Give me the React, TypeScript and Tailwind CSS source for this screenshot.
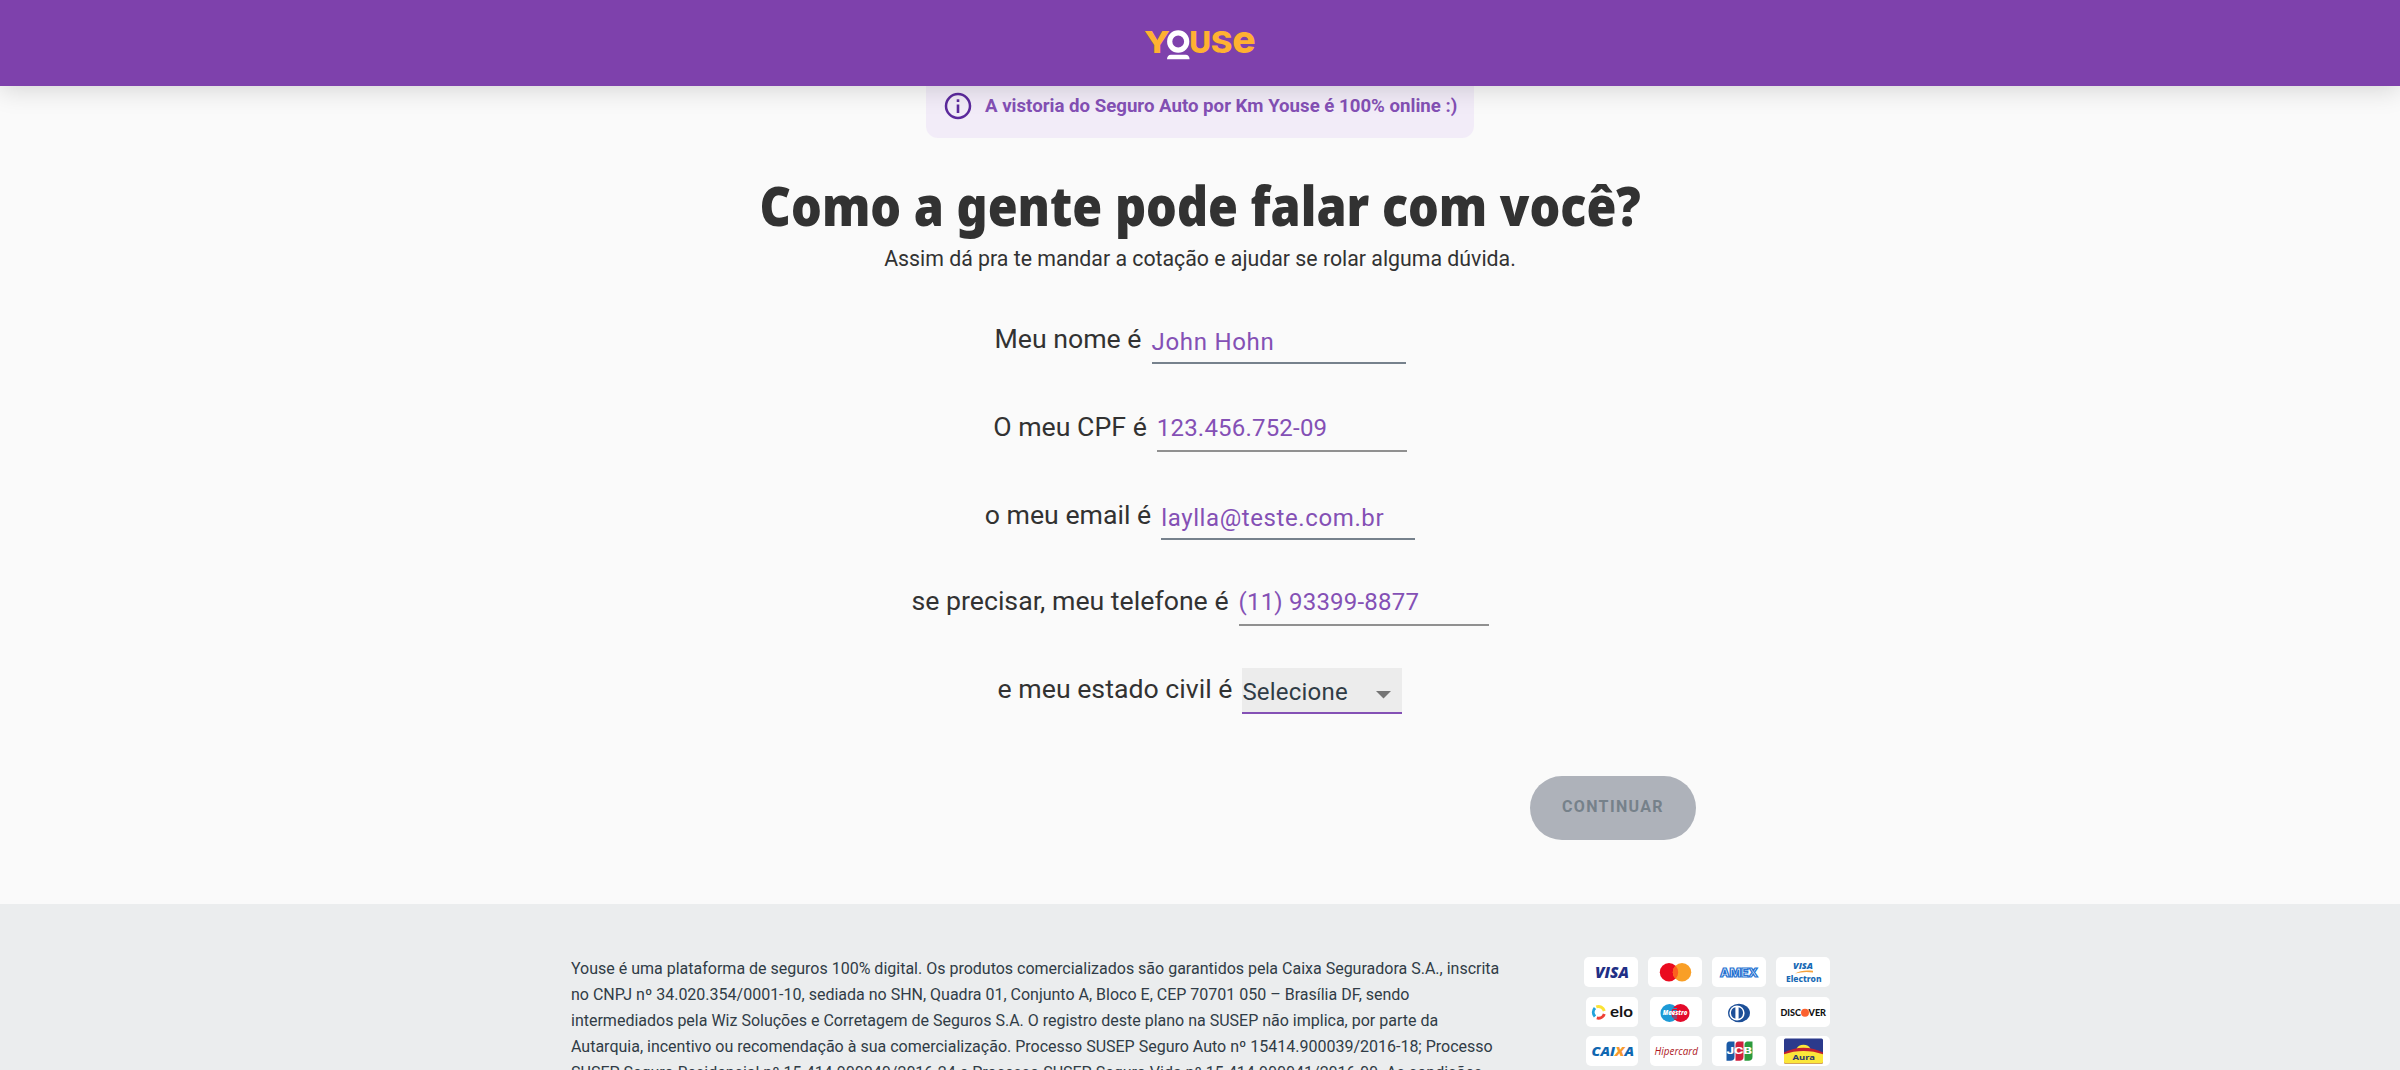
import type { ReactNode } from 'react';

function Logo() {
  return (
    <svg className="h-[34px] w-[116px] overflow-visible font-['Inter',sans-serif] font-extrabold" viewBox="0 0 116 34" fill="#ffb131" role="img" aria-label="Youse">
      <text x="2" y="24.7" fontSize="30" textLength="26" lengthAdjust="spacingAndGlyphs">Y</text>
      <text x="47.2" y="24.7" fontSize="30">U</text>
      <text x="68.7" y="24.7" fontSize="30" textLength="21.7" lengthAdjust="spacingAndGlyphs">S</text>
      <text x="90.2" y="24.7" fontSize="39">e</text>
      <ellipse cx="36.2" cy="13.5" rx="8.5" ry="8.7" fill="none" stroke="#fff" strokeWidth="5.2" />
      <path d="M25 31.300c0-2.600 1.600-4.600 4-4.600h14.600c2.400 0 4 2 4 4.600z" fill="#fff" />
    </svg>
  );
}

function InfoIcon() {
  return (
    <svg className="size-[28px]" viewBox="0 0 28 28">
      <circle cx="14" cy="14" r="12" fill="none" stroke="#5c2a9d" strokeWidth="2.5" />
      <rect x="12.7" y="7.3" width="2.6" height="2.7" fill="#5c2a9d" />
      <rect x="12.7" y="12.5" width="2.6" height="8.5" fill="#5c2a9d" />
    </svg>
  );
}

function Card({ narrow, children }: { narrow?: boolean; children: ReactNode }) {
  return (
    <div className={narrow ? 'ml-[2px] h-[30px] w-[52px] overflow-hidden rounded-[5px] bg-white' : 'h-[30px] w-[54px] overflow-hidden rounded-[5px] bg-white'}>
      <svg className={narrow ? '-ml-[2px] h-[30px] w-[54px] max-w-none' : 'h-[30px] w-[54px]'} viewBox="0 0 54 30">{children}</svg>
    </div>
  );
}

const italic = "font-['Open_Sans',sans-serif] font-extrabold italic";

function Cards() {
  return (
    <div className="mt-px grid grid-cols-4 content-start gap-x-[10px] gap-y-[9.5px]">
      <Card>
        <text x="11" y="20.5" fontSize="15.5" textLength="34" lengthAdjust="spacingAndGlyphs" fill="#1f2f86" className={italic}>VISA</text>
      </Card>
      <Card>
        <circle cx="21" cy="15.3" r="9.2" fill="#ea0b1f" />
        <circle cx="34" cy="15.3" r="9.2" fill="#f99f26" />
        <path d="M27.5 8.800a9.200 9.200 0 0 1 0 13a9.200 9.200 0 0 1 0-13z" fill="#fc5f1f" />
      </Card>
      <Card>
        <text x="8" y="19.5" fontSize="11.5" textLength="38" lengthAdjust="spacingAndGlyphs" fill="#fff" stroke="#2673d2" strokeWidth="1.2" className="font-['Inter',sans-serif] font-extrabold">AMEX</text>
      </Card>
      <Card>
        <text x="17" y="11.5" fontSize="9" textLength="20" lengthAdjust="spacingAndGlyphs" fill="#1769b5" className={italic}>VISA</text>
        <path d="M19 16.500c5-3.300 12-3.500 18-2.700v1.600c-6-.9-12-.600-18 1.100z" fill="#f5a13a" />
        <text x="10" y="24.7" fontSize="8.5" textLength="35.5" lengthAdjust="spacingAndGlyphs" fill="#1769b5" className="font-['Noto_Sans',sans-serif] font-extrabold">Electron</text>
      </Card>

      <Card narrow>
        <g fill="none" strokeWidth="3">
          <path d="M12.3 9.800a6.200 6.200 0 0 1 8 4.200" stroke="#fbe335" />
          <path d="M20.300 17a6.200 6.200 0 0 1-7.500 3.900" stroke="#ee4136" />
          <path d="M11 19.500a6.200 6.200 0 0 1 0-8.500" stroke="#21a3db" />
        </g>
        <text x="26" y="20.300" fontSize="16" textLength="23" lengthAdjust="spacingAndGlyphs" fill="#151515" className="font-['Lato',sans-serif] font-bold">elo</text>
      </Card>
      <Card narrow>
        <circle cx="21.5" cy="16" r="9" fill="#1c9ad6" />
        <circle cx="32.500" cy="16" r="9" fill="#e30b2b" />
        <path d="M25 11.500h4M25 13.500h4M25 19h4M25 21h4" stroke="#1c9ad6" strokeWidth=".9" />
        <text x="14.8" y="18.2" fontSize="6.5" textLength="24.5" lengthAdjust="spacingAndGlyphs" fill="#fff" className={italic}>Maestro</text>
      </Card>
      <Card>
        <ellipse cx="27" cy="16" rx="11" ry="9.2" fill="#1c4f98" />
        <circle cx="25" cy="16" r="7.6" fill="#fff" />
        <path d="M23.400 10.200a6 6 0 0 0 0 11.600zM26.600 10.200a6 6 0 0 1 0 11.600z" fill="#1c4f98" />
      </Card>
      <Card>
        <text x="4.500" y="19.200" fontSize="10" textLength="20.500" lengthAdjust="spacingAndGlyphs" fill="#111" className="font-['Lato',sans-serif] font-black">DISC</text>
        <circle cx="29" cy="15.700" r="4" fill="#fb6130" />
        <text x="32.500" y="19.200" fontSize="10" textLength="17.500" lengthAdjust="spacingAndGlyphs" fill="#111" className="font-['Lato',sans-serif] font-black">VER</text>
      </Card>

      <Card narrow>
        <text x="7.500" y="20" fontSize="13" textLength="42.500" lengthAdjust="spacingAndGlyphs" fill="#0f67b1" className={italic}>CAI<tspan fill="#f79a2e">X</tspan>A</text>
      </Card>
      <Card narrow>
        <text x="6.500" y="18.500" fontSize="11.500" textLength="43.500" lengthAdjust="spacingAndGlyphs" fill="#ae1a25" className="font-['Open_Sans',sans-serif] font-medium italic">Hipercard</text>
      </Card>
      <Card>
        <path d="M17.500 5.500h5V21c0 2.500-1.500 3.800-4 3.800h-4V9c0-2.300 1-3.500 3-3.500z" fill="#1a5aa6" />
        <path d="M26.500 5.500h5V21c0 2.500-1.500 3.800-4 3.800h-4V9c0-2.300 1-3.500 3-3.500z" fill="#cf1f3c" />
        <path d="M35.500 5.500h5V21c0 2.500-1.500 3.800-4 3.800h-4V9c0-2.300 1-3.500 3-3.500z" fill="#2c9a3d" />
        <text x="14.500" y="18.200" fontSize="8.500" textLength="25.500" lengthAdjust="spacingAndGlyphs" fill="#fff" className="font-['Inter',sans-serif] font-extrabold">JCB</text>
      </Card>
      <Card>
        <rect x="8" y="2.500" width="39" height="25" rx="1.500" fill="#2b3a8c" />
        <path d="M20.500 13a7.500 6.500 0 0 1 14 0z" fill="#fbe73a" />
        <path d="M8 16.500c12-6.500 27-6.500 39 0V26a1.500 1.500 0 0 1-1.500 1.500h-36A1.500 1.500 0 0 1 8 26z" fill="#c3202f" />
        <path d="M8 18.300c12-4.500 27-4.500 39 0V26a1.500 1.500 0 0 1-1.500 1.500h-36A1.500 1.500 0 0 1 8 26z" fill="#fbe73a" />
        <text x="16.500" y="23.800" fontSize="7.500" textLength="22.500" lengthAdjust="spacingAndGlyphs" fill="#2b3a6c" className="font-['Noto_Sans',sans-serif] font-bold">Aura</text>
      </Card>
    </div>
  );
}

function Row({ label, className, children }: { label: string; className: string; children: ReactNode }) {
  return (
    <div className={`flex items-end justify-center ${className}`}>
      <label className="mb-[9px] mr-[10px] whitespace-nowrap text-[26.7px] leading-8 text-[#323232]">{label}</label>
      {children}
    </div>
  );
}

export default function App() {
  return (
    <div className="flex h-[1070px] w-full flex-col overflow-hidden bg-[#fafafa] font-['Roboto',sans-serif]">
      <header className="z-10 flex h-[86px] shrink-0 justify-center bg-[#7e41ac] pt-[28px] shadow-[0_4px_24px_rgba(0,0,0,0.15)]">
        <Logo />
      </header>

      <main className="flex h-[818px] shrink-0 flex-col items-center">
        <div className="flex h-[52px] w-[548px] items-start rounded-b-[12px] bg-[#f2ecf8] pl-[18px] pt-[6px]">
          <InfoIcon />
          <p className="ml-[13px] whitespace-nowrap text-[18.65px] font-bold leading-[28px] text-[#8450b5]">A vistoria do Seguro Auto por Km Youse é 100% online :)</p>
        </div>

        <h1 className="mt-[32px] scale-x-[0.897] whitespace-nowrap font-['Noto_Sans',sans-serif] text-[54px] font-black leading-[70px] text-[#323232]">Como a gente pode falar com você?</h1>
        <p className="mt-[4px] whitespace-nowrap text-[21.3px] leading-[30px] text-[#323232]">Assim dá pra te mandar a cotação e ajudar se rolar alguma dúvida.</p>

        <form className="w-full">
          <Row label="Meu nome é" className="h-[90px]">
            <div className="w-[254px] border-b-2 border-[#76818c] pb-[4px] text-2xl leading-8 tracking-[0.7px] text-[#8450b5]">John Hohn</div>
          </Row>
          <Row label="O meu CPF é" className="h-[88px]">
            <div className="w-[250px] border-b-2 border-[#909090] pb-[6px] text-2xl leading-8 tracking-[0.2px] text-[#8450b5]">123.456.752-09</div>
          </Row>
          <Row label="o meu email é" className="h-[88px]">
            <div className="w-[254px] border-b-2 border-[#76818c] pb-[4px] text-2xl leading-8 tracking-[0.6px] text-[#8450b5]">laylla@teste.com.br</div>
          </Row>
          <Row label="se precisar, meu telefone é" className="h-[86px]">
            <div className="w-[250px] border-b-2 border-[#909090] pb-[6px] text-2xl leading-8 tracking-[0.2px] text-[#8450b5]">(11) 93399-8877</div>
          </Row>
          <Row label="e meu estado civil é" className="h-[88px]">
            <div className="flex h-[46px] w-[160px] items-start justify-between border-b-2 border-[#8450b5] bg-[#ececec] pr-[11px] pt-[8px] text-2xl leading-8 tracking-[0.2px] text-[#303c46]">
              Selecione
              <svg className="mt-[15px] h-[7.5px] w-[15px]" viewBox="0 0 15 7.5"><path d="M0 0h15L7.500 7.500z" fill="#757575" /></svg>
            </div>
          </Row>
        </form>

        <div className="mt-[62px] flex w-[992px] justify-end">
          <button className="h-[64px] w-[166px] rounded-full bg-[#aeb2ba] pb-[2px] text-base font-bold tracking-[1.35px] text-[#76818a]">CONTINUAR</button>
        </div>
      </main>

      <footer className="flex flex-1 bg-[#ebedee] pl-[571px] pt-[52px]">
        <p className="w-[1013px] shrink-0 whitespace-nowrap text-base leading-[26px] text-[#303c46]">
          Youse é uma plataforma de seguros 100% digital. Os produtos comercializados são garantidos pela Caixa Seguradora S.A., inscrita<br />
          no CNPJ nº 34.020.354/0001-10, sediada no SHN, Quadra 01, Conjunto A, Bloco E, CEP 70701 050 – Brasília DF, sendo<br />
          intermediados pela Wiz Soluções e Corretagem de Seguros S.A. O registro deste plano na SUSEP não implica, por parte da<br />
          Autarquia, incentivo ou recomendação à sua comercialização. Processo SUSEP Seguro Auto nº 15414.900039/2016-18; Processo<br />
          SUSEP Seguro Residencial nº 15.414.900040/2016-24 e Processo SUSEP Seguro Vida nº 15.414.900041/2016-00. As condições
        </p>
        <Cards />
      </footer>
    </div>
  );
}
